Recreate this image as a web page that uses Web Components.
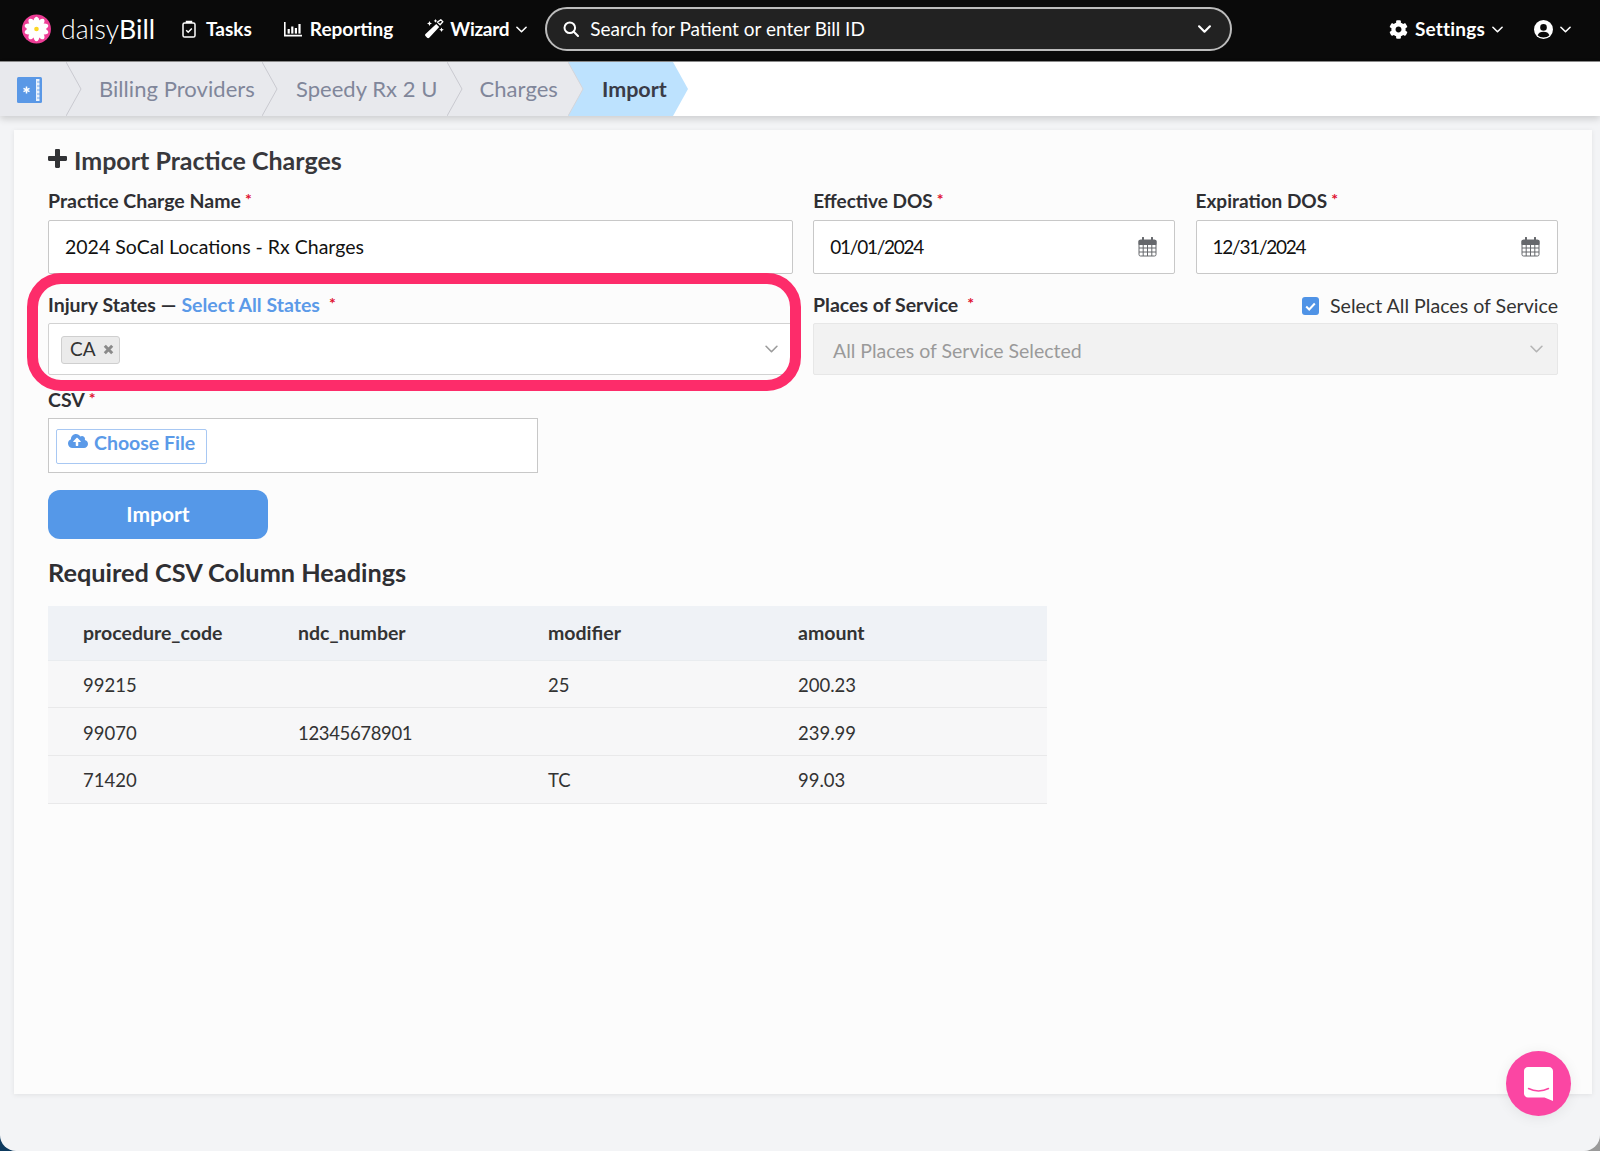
<!DOCTYPE html>
<html lang="en">
<head>
<meta charset="utf-8">
<title>Import Practice Charges</title>
<style>
  html, body { margin: 0; height: 100%; }
  body {
    background: linear-gradient(to right, #0d3a5e 50%, #9a9a9a 50%);
    font-family: Lato, "Liberation Sans", sans-serif;
    color: #2f2f33;
    overflow: hidden;
  }
</style>
</head>
<body>
<db-app>
  <db-header slot="header"></db-header>
  <db-breadcrumbs slot="crumbs">
    <db-crumb pad="66,0" z="5" first></db-crumb>
    <db-crumb pad="33,7" z="4">Billing Providers</db-crumb>
    <db-crumb pad="34,9" z="3">Speedy Rx 2 U</db-crumb>
    <db-crumb pad="33,10" z="2" last>Charges</db-crumb>
    <db-crumb pad="34,6" z="1" active>Import</db-crumb>
  </db-breadcrumbs>
  <db-import-form></db-import-form>
  <db-chat slot="chat"></db-chat>
</db-app>

<script>
const chevron = (w, h, color, sw) => `<svg width="${w}" height="${h}" viewBox="0 0 12 7" fill="none"><polyline points="1,1 6,6 11,1" stroke="${color}" stroke-width="${sw}" stroke-linecap="round" stroke-linejoin="round"/></svg>`;

const icons = {
  tasks: `<svg width="14" height="18" viewBox="0 0 14 18" fill="none" stroke="#fff" stroke-width="1.5"><rect x="1" y="3" width="12" height="14" rx="1.6"/><path d="M4.5 3V1.6h5V3" fill="#fff"/><path d="M4.2 10.2l2 2 3.6-3.8"/></svg>`,
  reporting: `<svg width="18" height="15" viewBox="0 0 18 15" fill="#fff"><path d="M0 0h1.6v12.8H18V14.4H0z"/><rect x="3.6" y="7" width="2.2" height="4.6"/><rect x="7.2" y="4.5" width="2.2" height="7.1"/><rect x="10.8" y="6" width="2.2" height="5.6"/><rect x="14.4" y="2" width="2.2" height="9.6"/></svg>`,
  wizard: `<svg width="20" height="20" viewBox="0 0 20 20" fill="#fff"><path d="M12.2 5l3 3L5.200 18.700c-.6.6-1.500.6-2.100 0l-1.600-1.600c-.6-.6-.6-1.500 0-2.100z"/><path d="M5.500 2l.8 1.700L8 4.500l-1.700.8L5.500 7l-.8-1.700L3 4.500l1.700-.8zM11.500 0l.6 1.300 1.300.6-1.300.6-.6 1.300-.6-1.300-1.300-.6 1.300-.6zM17.500 8.500l.7 1.500 1.600.7-1.600.7-.7 1.500-.7-1.500-1.600-.7 1.600-.7z"/><path d="M16.800 .8l2 2-2.700 3-2.600-2.600z" fill="none" stroke="#fff" stroke-width="1.300"/></svg>`,
  search: `<svg width="16" height="16" viewBox="0 0 16 16" fill="none" stroke="#fff" stroke-width="2"><circle cx="6.800" cy="6.800" r="5.300"/><path d="M10.800 10.800l4.200 4.200" stroke-linecap="round"/></svg>`,
  gear: `<svg width="19" height="19" viewBox="0 0 512 512" fill="#fff"><path d="M487.4 315.7l-42.6-24.6c4.3-23.2 4.3-47 0-70.2l42.6-24.6c4.9-2.8 7.1-8.6 5.500-14-11.100-35.600-30-67.800-54.700-94.600-3.800-4.100-10-5.100-14.800-2.300L380.800 110c-17.900-15.400-38.500-27.300-60.800-35.100V25.800c0-5.600-3.900-10.500-9.400-11.700-36.700-8.200-74.300-7.800-109.200 0-5.500 1.200-9.400 6.100-9.400 11.700V75c-22.200 7.900-42.800 19.800-60.800 35.100L88.700 85.500c-4.900-2.800-11-1.900-14.800 2.300-24.700 26.700-43.600 58.900-54.700 94.600-1.700 5.400.6 11.200 5.500 14L67.300 221c-4.300 23.200-4.300 47 0 70.200l-42.6 24.600c-4.900 2.800-7.100 8.600-5.500 14 11.100 35.600 30 67.800 54.700 94.600 3.800 4.100 10 5.100 14.800 2.300l42.600-24.600c17.900 15.400 38.500 27.300 60.800 35.100v49.200c0 5.600 3.900 10.500 9.400 11.700 36.700 8.200 74.300 7.800 109.200 0 5.500-1.200 9.400-6.100 9.400-11.700v-49.200c22.200-7.900 42.800-19.800 60.800-35.100l42.600 24.600c4.900 2.800 11 1.900 14.800-2.300 24.700-26.700 43.600-58.900 54.700-94.600 1.500-5.500-.7-11.300-5.600-14.100zM256 336c-44.100 0-80-35.900-80-80s35.900-80 80-80 80 35.900 80 80-35.900 80-80 80z"/></svg>`,
  user: `<svg width="19" height="19" viewBox="0 0 20 20"><circle cx="10" cy="10" r="10" fill="#fff"/><circle cx="10" cy="7.800" r="3.500" fill="#0a0a0a"/><path d="M3.800 16c1-2.600 3-3.700 6.200-3.700s5.200 1.100 6.200 3.700c-1.600 1.500-3.800 2.400-6.200 2.400S5.400 17.500 3.800 16z" fill="#0a0a0a"/></svg>`,
  calendar: `<svg width="19" height="20" viewBox="0 0 19 20" fill="none" stroke="#66686c" stroke-width="1" style="margin-top:2px"><rect x="1" y="3" width="17" height="16" rx="1.500"/><path d="M1 3.500h17V7.500H1z" fill="#66686c"/><path d="M1 11h17M1 15h17M5.200 7v12M9.500 7v12M13.800 7v12"/><path d="M5 .8v4M14 .8v4" stroke-width="2" stroke-linecap="round"/></svg>`,
  plus: `<svg width="19" height="19" viewBox="0 0 19 19" fill="#323336" style="margin-top:-3px"><path d="M7 1.200C7 .5 7.500 0 8.200 0h2.600c.7 0 1.200.5 1.200 1.200V7h5.800c.7 0 1.200.5 1.200 1.200v2.600c0 .7-.5 1.200-1.200 1.200H12v5.800c0 .7-.5 1.200-1.200 1.200H8.200C7.500 19 7 18.500 7 17.800V12H1.200C.5 12 0 11.500 0 10.800V8.200C0 7.500.5 7 1.200 7H7z"/></svg>`,
  cloud: `<svg width="20" height="16" viewBox="0 0 640 512" fill="#5b9ae8"><path d="M537.6 226.6c4.100-10.700 6.400-22.400 6.400-34.600 0-53-43-96-96-96-19.700 0-38.100 6-53.300 16.200C367 64.200 315.300 32 256 32c-88.400 0-160 71.600-160 160 0 2.700.1 5.400.2 8.100C40.200 219.800 0 273.200 0 336c0 79.500 64.500 144 144 144h368c70.700 0 128-57.300 128-128 0-61.900-44-113.600-102.400-125.400zM393.400 288H328v112c0 8.800-7.200 16-16 16h-48c-8.800 0-16-7.200-16-16V288h-65.400c-14.300 0-21.400-17.200-11.300-27.300l105.400-105.400c6.200-6.200 16.400-6.200 22.600 0l105.400 105.400c10.100 10.100 2.900 27.300-11.300 27.300z"/></svg>`,
  book: `<svg width="25" height="26" viewBox="0 0 25 26"><rect width="25" height="26" rx="1.500" fill="#5a98e6"/><path d="M19 2h3.500v22H19z" fill="#eaf2fc"/><path d="M20 5h3M20 9h3M20 13h3M20 17h3M20 21h3" stroke="#5a98e6" stroke-width=".8"/><path d="M9.500 9.500v7M6.500 11.300l6 3.400M12.500 11.300l-6 3.400" stroke="#fff" stroke-width="1.500"/></svg>`,
  logo: `<svg width="30" height="30" viewBox="0 0 30 30"><circle cx="15" cy="15" r="15" fill="#ee3e96"/>${[0,36,72,108,144,180,216,252,288,324].map(a => `<ellipse cx="15" cy="8" rx="3.100" ry="5.800" fill="#fff" transform="rotate(${a} 15 15)"/>`).join("")}<circle cx="15" cy="15" r="2.400" fill="#fbd626"/></svg>`,
};

class App extends HTMLElement {
  constructor() {
    super();
    this.attachShadow({ mode: "open" }).innerHTML = `
      <style>
        :host { display: flex; flex-direction: column; height: 1151px; background: #f3f4f6; border-radius: 0 0 16px 16px; overflow: hidden; position: relative; }
        main { padding: 14px 8px 0 14px; }
      </style>
      <slot name="header"></slot>
      <slot name="crumbs"></slot>
      <main><slot></slot></main>
      <slot name="chat"></slot>`;
  }
}

class Header extends HTMLElement {
  constructor() {
    super();
    this.attachShadow({ mode: "open" }).innerHTML = `
      <style>
        :host { display: flex; align-items: center; height: 58px; box-sizing: content-box; background: #0a0a0a; border-bottom: 1px solid #8d8d8d; color: #fff; padding: 0 29px 3px 22px; font-size: 19px; font-weight: 700; }
        .logo { display: flex; align-items: center; width: 133px; flex: none; gap: 10px; font-size: 26.700px; font-weight: 300; }
        .logo b { font-weight: 400; }
        .item { display: flex; align-items: center; flex: none; }
        .item svg { flex: none; }
        .item span { padding-bottom: 2px; }
        .search { flex: none; box-sizing: border-box; width: 687px; height: 44px; margin-left: 18px; border: 2px solid #bcbcbc; border-radius: 22px; background: #222; display: flex; align-items: center; padding: 0 19px 0 16px; gap: 11px; font-weight: 400; font-size: 19px; }
        .search span { flex: 1; padding-bottom: 2px; }
        .right { margin-left: auto; display: flex; align-items: center; }
      </style>
      <div class="logo">${icons.logo}<span>daisy<b>Bill</b></span></div>
      <div class="item" style="margin-left:27px;gap:10px">${icons.tasks}<span>Tasks</span></div>
      <div class="item" style="margin-left:32px;gap:8px">${icons.reporting}<span>Reporting</span></div>
      <div class="item" style="margin-left:31px;gap:6px">${icons.wizard}<span style="letter-spacing:-.3px">Wizard</span><span style="margin-left:1px;padding:0;display:flex">${chevron(11, 7, "#fff", 1.700)}</span></div>
      <div class="search">${icons.search}<span>Search for Patient or enter Bill ID</span>${chevron(13, 8, "#fff", 2)}</div>
      <div class="right">
        <div class="item" style="gap:7px">${icons.gear}<span style="letter-spacing:.2px">Settings</span><span style="padding:0;display:flex">${chevron(11, 7, "#fff", 1.700)}</span></div>
        <div class="item" style="margin-left:31px;gap:7px">${icons.user}${chevron(11, 7, "#fff", 1.700)}</div>
      </div>`;
  }
}

class Breadcrumbs extends HTMLElement {
  constructor() {
    super();
    this.attachShadow({ mode: "open" }).innerHTML = `
      <style>
        :host { display: flex; height: 54px; background: #fff; box-shadow: 0 3px 7px rgba(0,0,0,.16); position: relative; z-index: 1; flex: none; }
      </style>
      <slot></slot>`;
  }
}

class Crumb extends HTMLElement {
  constructor() {
    super();
    this.attachShadow({ mode: "open" });
  }
  connectedCallback() {
    const [left, right] = this.getAttribute("pad").split(",");
    const active = this.hasAttribute("active");
    const last = this.hasAttribute("last");
    const fill = active ? "#bde2fe" : "#e8e9ed";
    const line = active ? "" : `<polyline points="0,0 15,27 0,54" fill="none" stroke="${last ? "#d4d5da" : "#c9cad0"}"/>`;
    this.shadowRoot.innerHTML = `
      <style>
        :host { display: flex; align-items: center; height: 54px; box-sizing: border-box; padding: 0 ${right}px 1px ${left}px; background: ${fill}; position: relative; font-size: ${active ? 21.5 : 22}px; letter-spacing: ${active ? 0 : ".05px"}; color: ${active ? "#3a3b47" : "#80869a"}; font-weight: ${active ? 700 : 400}; z-index: ${this.getAttribute("z")}; }
        .arrow { position: absolute; left: 100%; top: 0; }
        .home { position: absolute; left: 17px; top: 15px; }
      </style>
      ${this.hasAttribute("first") ? `<span class="home">${icons.book}</span>` : ""}
      <slot></slot>
      <svg class="arrow" width="16" height="54"><polygon points="0,0 15,27 0,54" fill="${fill}"/>${line}</svg>`;
  }
}

class Field extends HTMLElement {
  constructor() {
    super();
    this.attachShadow({ mode: "open" });
  }
  connectedCallback() {
    const gap = this.getAttribute("star-gap") || "4";
    this.shadowRoot.innerHTML = `
      <style>
        :host { display: block; min-width: 0; }
        .label { display: flex; align-items: center; box-sizing: border-box; height: 24px; padding-bottom: 2px; margin-bottom: var(--label-gap, 6px); font-size: var(--label-size, 19.500px); font-weight: 700; color: #2f2f33; white-space: nowrap; }
        .star { color: #e0102f; font-size: 16px; margin-left: ${gap}px; position: relative; top: -2px; }
        ::slotted([slot="aside"]) { margin-left: auto; position: relative; top: 1px; }
      </style>
      <div class="label"><span>${this.getAttribute("label")}</span><slot name="extra"></slot><span class="star">*</span><slot name="aside"></slot></div>
      <slot></slot>`;
  }
}

class TextBox extends HTMLElement {
  constructor() {
    super();
    this.attachShadow({ mode: "open" });
  }
  connectedCallback() {
    const date = this.hasAttribute("date");
    this.shadowRoot.innerHTML = `
      <style>
        :host { display: flex; align-items: center; justify-content: space-between; box-sizing: border-box; height: 54px; padding: 0 17px 2px 16px; background: #fff; border: 1px solid #c8c8c8; border-radius: 2px; font-size: ${date ? 19 : 19.5}px; letter-spacing: ${date ? "-1.250px" : "0"}; color: #111; }
      </style>
      <span>${this.getAttribute("value")}</span>${date ? icons.calendar : ""}`;
  }
}

class Select extends HTMLElement {
  constructor() {
    super();
    this.attachShadow({ mode: "open" });
  }
  connectedCallback() {
    const off = this.hasAttribute("disabled");
    this.shadowRoot.innerHTML = `
      <style>
        :host { display: flex; align-items: center; justify-content: space-between; box-sizing: border-box; height: 52px; padding: 0 14px 0 ${off ? 19 : 12}px; background: ${off ? "#f2f2f2" : "#fff"}; border: 1px solid ${off ? "#e7e7e7" : "#d2d2d2"}; border-radius: 2px; font-size: 19.500px; color: #9a9a9a; }
        .value { padding-top: 3px; }
        .chev { display: flex; margin-top: 0; }
      </style>
      <div class="value"><slot></slot></div><span class="chev">${chevron(13, 8, off ? "#b5b5b5" : "#9c9c9c", 1.500)}</span>`;
  }
}

class Tag extends HTMLElement {
  constructor() {
    super();
    this.attachShadow({ mode: "open" }).innerHTML = `
      <style>
        :host { display: inline-flex; align-items: center; box-sizing: border-box; height: 28px; width: 59px; margin-top: -2px; padding: 0 0 2px 8px; gap: 7px; background: #ebebeb; border: 1px solid #cfcfcf; border-radius: 3px; font-size: 19px; color: #333; vertical-align: top; }
        svg { flex: none; margin-top: 2px; }
      </style>
      <slot></slot>
      <svg width="11" height="11" viewBox="0 0 11 11"><path d="M1.800 1.800l7.400 7.400M9.200 1.800l-7.400 7.400" stroke="#8a8a8a" stroke-width="3"/></svg>`;
  }
}

class FilePicker extends HTMLElement {
  constructor() {
    super();
    this.attachShadow({ mode: "open" }).innerHTML = `
      <style>
        :host { display: block; box-sizing: border-box; width: 490px; height: 55px; padding: 10px 0 0 7px; background: #fff; border: 1px solid #c8c8c8; }
        .btn { display: flex; align-items: center; box-sizing: border-box; width: 151px; height: 35px; padding: 0 0 9px 11px; gap: 6px; background: #fff; border: 1px solid #a8c8f3; border-radius: 2px; color: #5b9ae8; font-size: 19.500px; font-weight: 700; }
        svg { margin-top: -3px; }
      </style>
      <div class="btn">${icons.cloud}<span>Choose File</span></div>`;
  }
}

class Table extends HTMLElement {
  constructor() {
    super();
    this.attachShadow({ mode: "open" }).innerHTML = `
      <style>
        :host { display: block; width: 999px; font-size: 18.500px; color: #333; }
        .row { display: grid; grid-template-columns: 215px 250px 250px 284px; align-items: center; height: 48px; background: #f7f7f8; border-bottom: 1px solid #e9e9ea; box-sizing: border-box; padding: 2px 0 0; }
        .row.first { height: 47px; }
        .row.end { padding-top: 1px; }
        .head { height: 55px; padding: 0 0 2px; background: #eff2f6; font-weight: 700; font-size: 19.500px; border-bottom-color: #e9ecef; }
        .row span { padding-left: 35px; }
      </style>
      <div class="row head"><span>procedure_code</span><span>ndc_number</span><span>modifier</span><span>amount</span></div>
      <div class="row first"><span>99215</span><span></span><span>25</span><span>200.23</span></div>
      <div class="row"><span>99070</span><span style="letter-spacing:-.35px">12345678901</span><span></span><span>239.99</span></div>
      <div class="row end"><span>71420</span><span></span><span>TC</span><span>99.03</span></div>`;
  }
}

class ImportForm extends HTMLElement {
  constructor() {
    super();
    this.attachShadow({ mode: "open" }).innerHTML = `
      <style>
        :host { display: block; position: relative; box-sizing: border-box; width: 1578px; height: 964px; padding: 15px 34px 0; background: #fcfcfc; box-shadow: 0 1px 5px rgba(0,0,0,.08); }
        h2 { display: flex; align-items: center; gap: 7px; height: 30px; margin: 0 0 14px; font-size: 25px; font-weight: 700; color: #38383c; white-space: nowrap; }
        h3 { height: 30px; line-height: 30px; margin: 18px 0 19px; font-size: 25.300px; font-weight: 700; color: #2f2f33; }
        .row1 { display: grid; grid-template-columns: 745px 362px 362px; column-gap: 20.250px; --label-gap: 7px; --label-size: 19px; }
        .row1 > :first-child { --label-size: 19.500px; }
        .row2 { display: grid; grid-template-columns: 745px 745px; column-gap: 20px; margin-top: 19px; }
        .csv { margin-top: 13px; }
        a { color: #5b9ae8; font-weight: 700; }
        .sep { margin: 0 5px; }
        .check { display: flex; align-items: center; gap: 11px; font-size: 19.600px; font-weight: 400; color: #333; }
        .box { display: flex; align-items: center; justify-content: center; width: 17px; height: 18px; background: #4f93e6; border-radius: 3px; position: relative; top: 1px; }
        .import { display: flex; align-items: center; justify-content: center; box-sizing: border-box; width: 220px; height: 49px; margin-top: 17px; padding-bottom: 2px; background: #5598e8; border-radius: 12px; color: #fff; font-size: 21px; font-weight: 700; }
        .mark { position: absolute; left: 13px; top: 143px; width: 774px; height: 118px; box-sizing: border-box; border: 11px solid #fd2c6a; border-radius: 34px; pointer-events: none; }
      </style>
      <h2>${icons.plus}<span>Import Practice Charges</span></h2>
      <div class="row1">
        <db-field label="Practice Charge Name"><db-textbox value="2024 SoCal Locations - Rx Charges"></db-textbox></db-field>
        <db-field label="Effective DOS"><db-textbox date value="01/01/2024"></db-textbox></db-field>
        <db-field label="Expiration DOS"><db-textbox date value="12/31/2024"></db-textbox></db-field>
      </div>
      <div class="row2">
        <db-field label="Injury States" star-gap="9">
          <span slot="extra"><span class="sep">—</span><a>Select All States</a></span>
          <db-select><db-tag>CA</db-tag></db-select>
        </db-field>
        <db-field label="Places of Service" star-gap="9">
          <div slot="aside" class="check"><span class="box"><svg width="11" height="9" viewBox="0 0 11 9" fill="none"><path d="M1.200 4.500l3 3 5.600-6" stroke="#fff" stroke-width="2"/></svg></span><span>Select All Places of Service</span></div>
          <db-select disabled>All Places of Service Selected</db-select>
        </db-field>
      </div>
      <div class="csv"><db-field label="CSV"><db-file></db-file></db-field></div>
      <div class="import">Import</div>
      <h3>Required CSV Column Headings</h3>
      <db-table></db-table>
      <div class="mark"></div>`;
  }
}

class Chat extends HTMLElement {
  constructor() {
    super();
    this.attachShadow({ mode: "open" }).innerHTML = `
      <style>
        :host { position: absolute; left: 1506px; top: 1051px; width: 65px; height: 65px; border-radius: 50%; background: #fb46a3; display: flex; align-items: center; justify-content: center; z-index: 3; box-shadow: 0 2px 14px rgba(0,0,0,.07); }
      </style>
      <svg width="29" height="34" viewBox="0 0 29 34"><path d="M4 0h21c2.200 0 4 1.800 4 4v30l-8.500-3.500H4c-2.200 0-4-1.800-4-4V4C0 1.800 1.800 0 4 0z" fill="#fff"/><path d="M4.500 21.500c6 3.200 14 3.200 20 0" fill="none" stroke="#fb46a3" stroke-width="1.500" stroke-linecap="round"/></svg>`;
  }
}

customElements.define("db-app", App);
customElements.define("db-header", Header);
customElements.define("db-breadcrumbs", Breadcrumbs);
customElements.define("db-crumb", Crumb);
customElements.define("db-field", Field);
customElements.define("db-textbox", TextBox);
customElements.define("db-select", Select);
customElements.define("db-tag", Tag);
customElements.define("db-file", FilePicker);
customElements.define("db-table", Table);
customElements.define("db-import-form", ImportForm);
customElements.define("db-chat", Chat);
</script>
</body>
</html>
